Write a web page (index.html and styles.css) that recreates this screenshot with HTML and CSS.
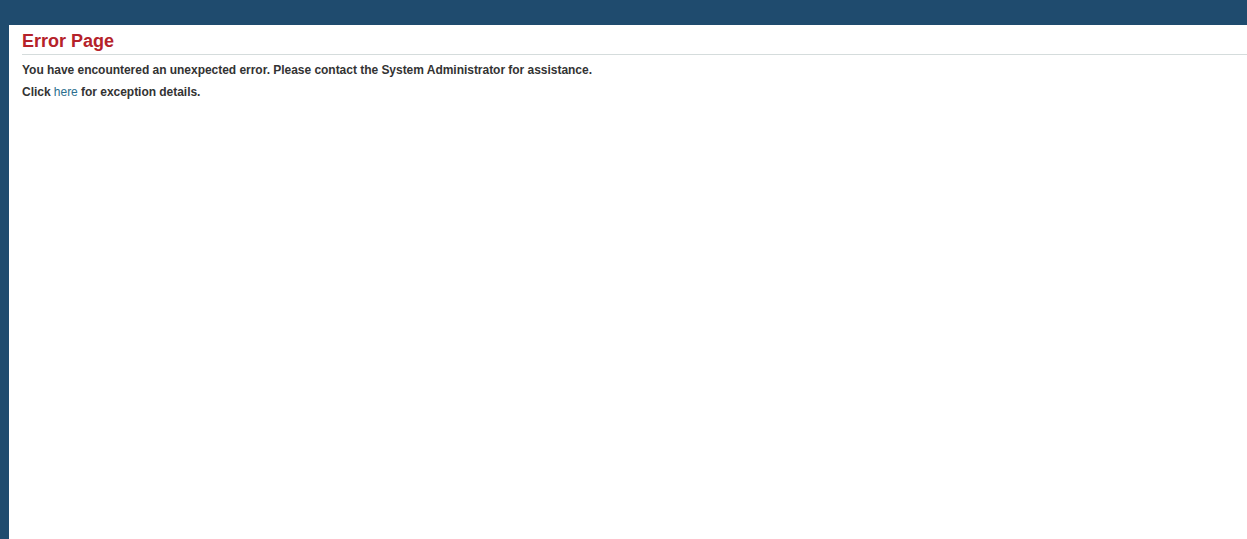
FILE: index.html
```html
<!DOCTYPE html>
<html>
<head>
<meta charset="utf-8">
<title>Error Page</title>
<link rel="stylesheet" href="styles.css">
</head>
<body>
<div class="topbar"></div>
<div class="main">
  <div class="panel">
    <h1 class="title">Error Page</h1>
    <p class="msg">You have encountered an unexpected error. Please contact the System Administrator for assistance.</p>
    <p class="msg">Click <a class="link" href="#">here</a> for exception details.</p>
  </div>
</div>
</body>
</html>
```
FILE: styles.css
```css
html, body {
  margin: 0;
  padding: 0;
  height: 100%;
}
body {
  background: #1f4b6e;
  font-family: "Liberation Sans", Arial, sans-serif;
  display: flex;
  flex-direction: column;
}
.topbar {
  height: 25px;
  flex: none;
}
.main {
  flex: 1;
  padding-left: 9px;
  display: flex;
}
.panel {
  flex: 1;
  background: #ffffff;
  padding: 5px 0 0 13px;
}
.title {
  margin: 0;
  font-size: 18px;
  font-weight: bold;
  color: #b5222a;
  line-height: 22px;
  padding-bottom: 2px;
  border-bottom: 1px solid #d5dcdc;
}
.msg {
  margin: 0;
  font-size: 12px;
  font-weight: bold;
  color: #333333;
  line-height: 22px;
  letter-spacing: -0.03px;
}
.title + .msg {
  margin-top: 4px;
}
.link {
  color: #2b6f8e;
  font-weight: normal;
  text-decoration: none;
}
```
